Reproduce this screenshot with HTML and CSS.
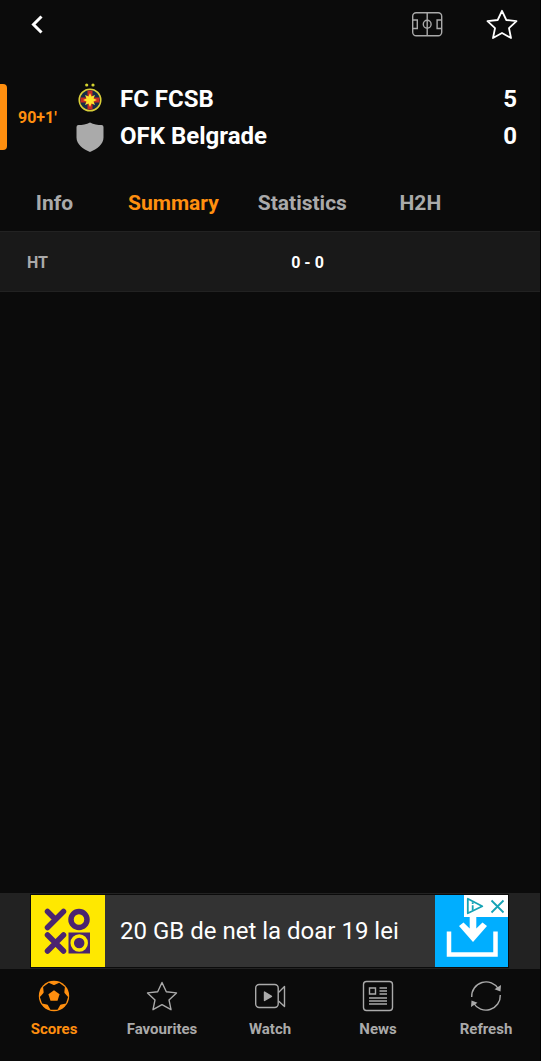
FILE: index.html
```html
<!DOCTYPE html>
<html lang="en">
<head>
<meta charset="utf-8">
<meta name="viewport" content="width=device-width, initial-scale=1">
<title>FC FCSB - OFK Belgrade</title>
<link rel="stylesheet" href="styles.css">
</head>
<body>
<div class="app">
  <header class="topbar">
    <button class="icon-btn" type="button" aria-label="Back">
      <svg width="30" height="30" viewBox="0 0 30 30" fill="none" stroke="#fff" stroke-width="3"><path d="M18.500 7.500 10.500 15.500l8 8"/></svg>
    </button>
    <div class="actions">
      <button class="icon-btn" type="button" aria-label="Lineups">
        <svg width="32" height="32" viewBox="0 0 32 32" fill="none" stroke="#aaa" stroke-width="1.400"><rect x="1.700" y="4.700" width="29" height="23" rx="3.500"/><path d="M16.200 4.700v23M1.700 12h4.600v8.500H1.700M30.700 12h-4.600v8.500h4.600"/><circle cx="16.200" cy="16.200" r="3.900"/></svg>
      </button>
      <button class="icon-btn" type="button" aria-label="Add to favourites">
        <svg width="32" height="32" viewBox="0 0 32 32" fill="none" stroke="#fff" stroke-width="1.800" stroke-linejoin="round"><path d="m16 2.800 4.300 9.200 10.200 1.200-7.500 7 2 9.800-9-5-9 5 2-9.800-7.500-7L11.700 12z"/></svg>
      </button>
    </div>
  </header>

  <main class="content">
    <section class="match">
      <span class="live-bar"></span>
      <span class="minute">90+1'</span>
      <div class="teams">
        <div class="team">
          <svg class="crest" width="30" height="32" viewBox="0 0 30 32">
            <circle cx="11.700" cy="2" r="1.600" fill="#d3d22e"/><circle cx="18" cy="2" r="1.600" fill="#d3d22e"/>
            <circle cx="15" cy="17" r="10.800" fill="#152c49" stroke="#d9cf38" stroke-width="1.500"/>
            <path d="M12.500 7.500h5v19h-5zM5.500 14.500h19v5h-19z" fill="#c62b22"/>
            <path d="m15 10 1.500 3.500 3.500-1.500-1.500 3.500 3.500 1.500-3.500 1.500 1.500 3.500-3.500-1.500-1.500 3.500-1.500-3.500-3.500 1.500 1.500-3.500-3.500-1.500 3.500-1.500-1.500-3.500 3.500 1.500z" fill="#ffe32b"/>
          </svg>
          <span class="team-name">FC FCSB</span><span class="score">5</span>
        </div>
        <div class="team">
          <svg class="crest" width="30" height="32" viewBox="0 0 30 32"><path d="M15 2.500c3.500 2.300 8 2.500 11.500 2.500q2 .2 2 2v10.500c0 7-6.500 11.500-13.500 14.500C8 29 1.500 24.500 1.500 17.500V7q0-1.800 2-2C7 5 11.500 4.800 15 2.500z" fill="#aaa"/></svg>
          <span class="team-name">OFK Belgrade</span><span class="score">0</span>
        </div>
      </div>
    </section>

    <nav class="tabs" aria-label="Match sections">
      <a href="#info">Info</a>
      <a class="active" href="#summary" aria-current="page">Summary</a>
      <a href="#statistics">Statistics</a>
      <a href="#h2h">H2H</a>
    </nav>

    <section class="period" id="summary">
      <span class="period-name">HT</span>
      <span class="period-score">0 - 0</span>
    </section>
  </main>

  <aside class="ad" aria-label="Advertisement">
    <div class="ad-body">
      <svg class="ad-logo" width="74" height="72" viewBox="0 0 74 72" role="img" aria-label="YOXO">
        <rect width="74" height="72" fill="#ffe800"/>
        <g fill="none" stroke="#4b2470" stroke-width="5.500" stroke-linecap="round"><path d="m16.500 16.500 8 8M32.500 16.500l-16 16M16.500 40l16 16M32.500 40l-16 16"/><circle cx="48" cy="24.500" r="8"/></g>
        <path d="M37.500 37.500H59v21H37.500z" fill="#4b2470"/><circle cx="48.200" cy="48" r="7" fill="#4b2470" stroke="#ffe800" stroke-width="3.500"/>
      </svg>
      <span class="ad-text">20 GB de net la doar 19 lei</span>
      <a class="ad-install" href="#install" aria-label="Install">
        <svg width="73" height="72" viewBox="0 0 73 72" fill="none"><path d="M14 36.500v23h46.500v-23" stroke="#fff" stroke-width="4.500"/><path d="M34.700 18h6.600v15.500L47.500 27.500l4.500 3.500L38 47 24 31l4.500-3.500 6.200 6z" fill="#fff"/></svg>
      </a>
      <button class="ad-choices" type="button" aria-label="Close advertisement">
        <svg width="44" height="22" viewBox="0 0 44 22" fill="none" stroke="#15a3b5" stroke-width="1.800"><path d="M3.800 3.800v14.500l14.500-7z" stroke-linejoin="round"/><path d="M8.700 7.300v1.700M8.700 10.200v5M27.500 5.500l12 12M39.500 5.500l-12 12"/></svg>
      </button>
    </div>
  </aside>

  <nav class="bottom-nav" aria-label="Main">
    <a class="active" href="#scores">
      <svg width="32" height="32" viewBox="0 0 32 32">
        <circle cx="16" cy="16" r="15.200" fill="#ff8f0f"/>
        <g fill="#0b0b0b">
          <path d="M12 19h8l2.500 5.500-3 5.200h-7l-3-5.200z"/>
          <path transform="rotate(72 16 16)" d="M12 19h8l2.500 5.500-3 5.200h-7l-3-5.200z"/>
          <path transform="rotate(144 16 16)" d="M12 19h8l2.500 5.500-3 5.200h-7l-3-5.200z"/>
          <path transform="rotate(216 16 16)" d="M12 19h8l2.500 5.500-3 5.200h-7l-3-5.200z"/>
          <path transform="rotate(288 16 16)" d="M12 19h8l2.500 5.500-3 5.200h-7l-3-5.200z"/>
        </g>
        <path d="m16 10.200 5.600 4.100-2.100 6.500h-7l-2.100-6.500z" fill="#ff8f0f"/>
      </svg>
      <span>Scores</span>
    </a>
    <a href="#favourites">
      <svg width="32" height="32" viewBox="0 0 32 32" fill="none" stroke="#aaa" stroke-width="1.400" stroke-linejoin="round"><path d="m16 2.500 4.300 9.200 10.200 1.200-7.500 7 2 9.800-9-5-9 5 2-9.800-7.500-7 10.200-1.200z"/></svg>
      <span>Favourites</span>
    </a>
    <a href="#watch">
      <svg width="32" height="32" viewBox="0 0 32 32" fill="none" stroke="#aaa" stroke-width="1.400" stroke-linejoin="round"><rect x="1.700" y="4.500" width="22.500" height="23" rx="3.500"/><path d="M24.500 12.500 30.500 6.500v20l-6-5.500"/><path d="M10.500 12v8.500l7-4.200z" fill="#aaa"/></svg>
      <span>Watch</span>
    </a>
    <a href="#news">
      <svg width="32" height="32" viewBox="0 0 32 32" fill="none" stroke="#aaa" stroke-width="1.400"><rect x="1.500" y="1.500" width="29" height="29" rx="3"/><path d="M7.500 8h6v6h-6zM17.500 8H25M17.500 11H25M17.500 14H25M7 18h18M7 21h18M7 24h18"/></svg>
      <span>News</span>
    </a>
    <a href="#refresh">
      <svg width="32" height="32" viewBox="0 0 32 32" fill="none" stroke="#aaa" stroke-width="1.400"><path d="M1.700 17A14.400 14.400 0 0 1 28.500 9M30.300 15A14.400 14.400 0 0 1 3.500 23"/><path d="m31 5-.5 6.500-6-2.200zM1 27l.5-6.500 6 2.200z" fill="#aaa" stroke="none"/></svg>
      <span>Refresh</span>
    </a>
  </nav>
</div>
</body>
</html>
```
FILE: styles.css
```css
* { box-sizing: border-box; }

body {
  margin: 0;
  background: #0b0b0b;
  color: #fff;
  font-family: Roboto, "Liberation Sans", sans-serif;
}

a { color: inherit; text-decoration: none; }

button {
  padding: 0;
  border: 0;
  background: none;
  cursor: pointer;
}

svg { display: block; flex: none; }

.app {
  display: flex;
  flex-direction: column;
  min-height: 100vh;
  border-right: 1px solid #000;
}

.topbar {
  display: flex;
  justify-content: space-between;
  align-items: center;
  height: 48px;
  padding: 0 22px 0 23px;
}

.actions {
  display: flex;
  gap: 43px;
}

.content { flex: 1; }

.match {
  display: flex;
  align-items: center;
  padding: 32px 23px 21px 0;
}

.live-bar {
  width: 7px;
  height: 66px;
  border-radius: 0 4px 4px 0;
  background: #ff8f0f;
}

.minute {
  width: 68px;
  padding-left: 11px;
  color: #ff8f0f;
  font-size: 16px;
  font-weight: 700;
}

.teams { flex: 1; }

.team {
  display: flex;
  align-items: center;
  height: 37px;
  font-size: 24px;
  font-weight: 700;
}

.team-name {
  flex: 1;
  padding-left: 15px;
}

.tabs {
  display: flex;
  height: 56px;
  align-items: center;
  color: #aaa;
  font-size: 21px;
  font-weight: 700;
}

.tabs a {
  min-width: 108px;
  padding: 0 19px 0 20px;
  text-align: center;
}

.active { color: #ff8f0f; }

.period {
  display: grid;
  grid-template-columns: 1fr auto 1fr;
  align-items: center;
  height: 61px;
  padding: 1px 0 0 27px;
  border-top: 1px solid #222;
  border-bottom: 1px solid #222;
  background: #191919;
  font-size: 16px;
  font-weight: 700;
}

.period-name { color: #aaa; }

.period-score { padding-left: 48px; }

.ad {
  padding: 2px 32px 2px 31px;
  background: #222;
}

.ad-body {
  position: relative;
  display: flex;
  align-items: center;
  outline: 1px solid #0b0b0b;
  background: #333;
}

.ad-text {
  flex: 1;
  padding-left: 15px;
  font-size: 24px;
  white-space: nowrap;
}

.ad-install { background: #00aeff; }

.ad-choices {
  position: absolute;
  top: 0;
  right: 0;
  background: #fff;
}

.bottom-nav {
  display: grid;
  grid-template-columns: repeat(5, 1fr);
  height: 92px;
  padding-top: 11px;
  color: #aaa;
  font-size: 15px;
  font-weight: 700;
}

.bottom-nav a {
  display: flex;
  flex-direction: column;
  align-items: center;
  gap: 8px;
}
```
